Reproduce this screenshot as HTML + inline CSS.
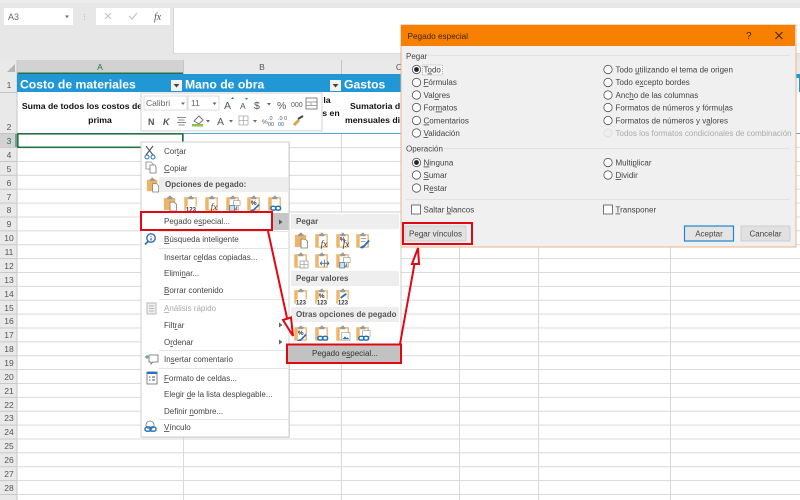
<!DOCTYPE html>
<html lang="es"><head><meta charset="utf-8"><title>Pegado especial</title>
<style>
html,body{margin:0;padding:0;width:800px;height:500px;overflow:hidden;background:#fff}
svg{display:block;filter:blur(.35px)}
text{font-family:"Liberation Sans",sans-serif;font-size:8px;fill:#444}
.r{font-size:8.5px;fill:#555;text-anchor:middle}
.h{font-size:8.5px;fill:#555;text-anchor:middle}
.t{font-size:12.2px;font-weight:bold;fill:#fff}
.b{font-size:8.7px;font-weight:bold;fill:#111;text-anchor:middle}
.d{font-size:8px;fill:#444}
.g{fill:#aaa}
.s{font-weight:bold;fill:#555}
</style></head><body>
<svg width="800" height="500" viewBox="0 0 800 500" xmlns="http://www.w3.org/2000/svg">
<defs>
<pattern id="rows" patternUnits="userSpaceOnUse" x="0" y="147.1" width="10" height="13.875"><rect y="0" width="10" height="1" fill="#dadada"/></pattern>
<pattern id="rowh" patternUnits="userSpaceOnUse" x="0" y="147.1" width="10" height="13.875"><rect y="0" width="10" height="1" fill="#c8c8c8"/></pattern>
<symbol id="clip" viewBox="0 0 16 18" overflow="visible">
<path d="M1 3H13V16H1Z" fill="#fff" stroke="#eaae5c" stroke-width="1.300"/>
<path d="M1 3H4V16H1Z" fill="#eeb566"/>
<path d="M4.500 3.500V2H6V.7H8.500V2H10V4.500H4.500Z" fill="#9a9a9a"/>
</symbol>
<symbol id="solid" viewBox="0 0 16 18" overflow="visible">
<path d="M1 3H13V16H1Z" fill="#eeb566"/>
<path d="M4.500 3.500V2H6V.7H8.500V2H10V4.500H4.500Z" fill="#9a9a9a"/>
<path d="M7.500 7.500H12L14.500 10V17H7.500Z" fill="#fff" stroke="#777" stroke-width=".8"/>
</symbol>
<symbol id="p123" viewBox="0 0 16 18" overflow="visible"><use href="#clip" width="16" height="18"/><rect x="2" y="12" width="13" height="6" fill="#fff"/><text x="2" y="17.500" style="font-size:6.500px;font-weight:bold;fill:#333">123</text></symbol>
<symbol id="pfx" viewBox="0 0 16 18" overflow="visible"><use href="#clip" width="16" height="18"/><text x="6" y="16" style="font-family:'Liberation Serif',serif;font-size:10px;font-style:italic;fill:#333">fx</text></symbol>
<symbol id="pgrid" viewBox="0 0 16 18" overflow="visible"><use href="#clip" width="16" height="18"/><path d="M6.500 9.500H15V17H6.500ZM10.700 9.500V17M6.500 13.200H15" fill="#fff" stroke="#999" stroke-width=".8"/></symbol>
<symbol id="pcol" viewBox="0 0 16 18" overflow="visible"><use href="#clip" width="16" height="18"/><path d="M5.500 12H15M5.500 12l2-2M5.500 12l2 2M15 12l-2-2M15 12l-2 2" fill="none" stroke="#2a6fb5" stroke-width="1"/><path d="M10 8v8" stroke="#777"/></symbol>
<symbol id="pbrush" viewBox="0 0 16 18" overflow="visible"><use href="#clip" width="16" height="18"/><path d="M5 7H11M5 10H10" stroke="#999"/><path d="M8 15.500L14 9" stroke="#2a6fb5" stroke-width="2"/><path d="M4 17l3-3 2 2-2 1.500Z" fill="#1e73c8"/></symbol>
<symbol id="ppct" viewBox="0 0 16 18" overflow="visible"><use href="#clip" width="16" height="18"/><text x="3" y="11" style="font-size:7px;font-weight:bold;fill:#333">%</text><path d="M9 15L14 10" stroke="#2a6fb5" stroke-width="1.800"/><path d="M4 17l4-3 2 2Z" fill="#1e73c8"/></symbol>
<symbol id="pfxp" viewBox="0 0 16 18" overflow="visible"><use href="#clip" width="16" height="18"/><text x="4" y="10" style="font-size:6.500px;font-weight:bold;fill:#333">%</text><text x="7" y="16" style="font-family:'Liberation Serif',serif;font-size:10px;font-style:italic;fill:#333">fx</text></symbol>
<symbol id="ppct123" viewBox="0 0 16 18" overflow="visible"><use href="#p123" width="16" height="18"/><text x="4" y="10.500" style="font-size:7px;font-weight:bold;fill:#333">%</text></symbol>
<symbol id="pb123" viewBox="0 0 16 18" overflow="visible"><use href="#p123" width="16" height="18"/><path d="M5 10.500L11 6" stroke="#2a6fb5" stroke-width="2"/></symbol>
<symbol id="plink" viewBox="0 0 16 18" overflow="visible"><use href="#clip" width="16" height="18"/><rect x="3" y="12" width="5.500" height="4" rx="2" fill="none" stroke="#1e6fb8" stroke-width="1.500"/><rect x="8" y="12" width="5.500" height="4" rx="2" fill="none" stroke="#1e6fb8" stroke-width="1.500"/></symbol>
<symbol id="pimg" viewBox="0 0 16 18" overflow="visible"><use href="#clip" width="16" height="18"/><rect x="6" y="8" width="9" height="8" fill="#fff" stroke="#999" stroke-width=".7"/><path d="M7 15l2.500-3 2 2 1-1 1.500 2Z" fill="#2a6fb5"/></symbol>
<symbol id="plink2" viewBox="0 0 16 18" overflow="visible"><use href="#clip" width="16" height="18"/><rect x="7" y="6" width="8" height="6" fill="#fff" stroke="#999" stroke-width=".7"/><rect x="3" y="12" width="5.500" height="4" rx="2" fill="none" stroke="#1e6fb8" stroke-width="1.500"/><rect x="8" y="12" width="5.500" height="4" rx="2" fill="none" stroke="#1e6fb8" stroke-width="1.500"/></symbol>
<symbol id="ptrans" viewBox="0 0 16 18" overflow="visible"><use href="#clip" width="16" height="18"/><rect x="8" y="6" width="7" height="5" fill="#fff" stroke="#999" stroke-width=".7"/><rect x="4" y="11" width="5" height="6" fill="#cfe0f2" stroke="#2a6fb5" stroke-width=".7"/><path d="M11 12v3H9" fill="none" stroke="#2a6fb5"/></symbol>
<symbol id="pdiag" viewBox="0 0 16 18" overflow="visible"><use href="#clip" width="16" height="18"/><text x="4" y="10.500" style="font-size:7px;font-weight:bold;fill:#333">%</text><path d="M7 16L13 10" stroke="#2a6fb5" stroke-width="1.800"/><path d="M3 17l3-2 2 2Z" fill="#1e73c8"/></symbol>
<symbol id="rad" viewBox="0 0 10 10" overflow="visible"><circle cx="5" cy="5" r="4.200" fill="#fff" stroke="#555" stroke-width=".8"/></symbol>
<symbol id="rads" viewBox="0 0 10 10" overflow="visible"><circle cx="5" cy="5" r="4.200" fill="#fff" stroke="#555" stroke-width=".8"/><circle cx="5" cy="5" r="2.400" fill="#222"/></symbol>
</defs>

<!-- ribbon area -->
<rect width="800" height="74" fill="#e7e7e7"/>
<rect y="0" width="800" height="3" fill="#ededed"/>
<rect x="4" y="8" width="69" height="17" fill="#fff"/>
<text x="8" y="20" style="font-size:9px;fill:#666">A3</text>
<path d="M65 15.500h4l-2 2.500Z" fill="#666"/>
<path d="M84.500 14v.8M84.500 16.500v.8M84.500 19v.8" stroke="#aaa"/>
<rect x="96" y="8" width="74" height="17" fill="#fff"/>
<path d="M105 13l6 6M111 13l-6 6" stroke="#c4c4c4" stroke-width="1.200"/>
<path d="M129 16l3 3 5-6" stroke="#c4c4c4" stroke-width="1.200" fill="none"/>
<text x="154" y="20" style="font-family:'Liberation Serif',serif;font-size:10px;font-style:italic;fill:#555">fx</text>
<rect x="173" y="8" width="627" height="45" fill="#fff"/>
<path d="M173.500 53V8" stroke="#d8d8d8"/><path d="M173 53.500H800" stroke="#d8d8d8"/>

<!-- column headers -->
<rect y="60" width="800" height="14" fill="#e9e9e9"/>
<rect x="17" y="60" width="166" height="14" fill="#d2d2d2"/>
<rect x="17" y="72.500" width="166" height="1.500" fill="#217346"/>
<path d="M15 64V72H7Z" fill="#b5b5b5"/>
<path d="M183.500 60V74M341.500 60V74" stroke="#c6c6c6"/>
<text class="h" x="100" y="70" style="fill:#217346">A</text>
<text class="h" x="262" y="70">B</text>
<text class="h" x="399" y="70">C</text>

<!-- row headers -->
<rect x="0" y="74" width="17" height="426" fill="#e9e9e9"/>
<rect x="0" y="147" width="17" height="353" fill="url(#rowh)"/>
<rect x="0" y="133" width="17" height="14" fill="#d2d2d2"/>
<rect x="15.500" y="133" width="1.500" height="14" fill="#217346"/>
<path d="M0 92.500H17M0 133.500H17" stroke="#c4c4c4"/>
<path d="M17 60V500" stroke="#c6c6c6"/>
<text class="r" x="9" y="88">1</text><text class="r" x="9" y="130">2</text><text class="r" x="9" y="144" style="fill:#217346">3</text>
<text class="r" x="9" y="158">4</text><text class="r" x="9" y="172">5</text><text class="r" x="9" y="186">6</text><text class="r" x="9" y="200">7</text><text class="r" x="9" y="213">8</text><text class="r" x="9" y="227">9</text><text class="r" x="9" y="241">10</text><text class="r" x="9" y="255">11</text><text class="r" x="9" y="269">12</text><text class="r" x="9" y="283">13</text><text class="r" x="9" y="297">14</text><text class="r" x="9" y="311">15</text><text class="r" x="9" y="324">16</text><text class="r" x="9" y="338">17</text><text class="r" x="9" y="352">18</text><text class="r" x="9" y="366">19</text><text class="r" x="9" y="380">20</text><text class="r" x="9" y="394">21</text><text class="r" x="9" y="408">22</text><text class="r" x="9" y="421">23</text><text class="r" x="9" y="435">24</text><text class="r" x="9" y="449">25</text><text class="r" x="9" y="463">26</text><text class="r" x="9" y="477">27</text><text class="r" x="9" y="491">28</text>

<!-- grid -->
<rect x="17" y="147" width="783" height="353" fill="url(#rows)"/>
<path d="M183.500 133V500M341.500 133V500M459.500 133V500M538.500 133V500M670.500 133V500" stroke="#d9d9d9"/>

<!-- table -->
<rect x="17" y="74" width="783" height="18" fill="#2197d5"/>
<rect x="796" y="78" width="4" height="14" fill="#f4f4f4"/>
<path d="M183 133.500H800" stroke="#4aa8dc"/>
<path d="M799.500 78V92" stroke="#2197d5"/>
<text class="t" x="20" y="88.500">Costo de materiales</text>
<text class="t" x="185" y="88.500">Mano de obra</text>
<text class="t" x="344" y="88.500">Gastos</text>
<rect x="171" y="80" width="11" height="11" fill="#f3f3f3"/><path d="M173.500 84h6l-3 3.500Z" fill="#444"/>
<rect x="330" y="80" width="11" height="11" fill="#f3f3f3"/><path d="M332.500 84h6l-3 3.500Z" fill="#444"/>
<text class="b" x="82" y="109">Suma de todos los costos de</text>
<text class="b" x="100" y="123">prima</text>
<text class="b" x="327" y="103">la</text>
<text class="b" x="331" y="116">s en</text>
<text class="b" x="350" y="109" style="text-anchor:start">Sumatoria d</text>
<text class="b" x="345" y="123" style="text-anchor:start">mensuales di</text>
<rect x="17.800" y="133.800" width="165" height="13.500" fill="#fff" stroke="#217346" stroke-width="1.600"/>

<!-- mini toolbar -->
<rect x="141" y="93" width="181" height="38" fill="#fff" stroke="#d2d2d2"/>
<rect x="144" y="96" width="43" height="14" fill="#fff" stroke="#d4d4d4" stroke-width=".8"/>
<rect x="188" y="96" width="31" height="14" fill="#fff" stroke="#d4d4d4" stroke-width=".8"/>
<text x="146" y="106" style="font-size:8.500px;fill:#666">Calibri</text>
<text x="191" y="106" style="font-size:8.500px;fill:#666">11</text>
<path d="M181 102.500h4l-2 2.500ZM212.500 102.500h4l-2 2.500Z" fill="#666"/>
<text x="224" y="109" style="font-size:10.500px;fill:#555">A</text><path d="M231 99l1.500-2 1.500 2Z" fill="#1e73c8"/>
<text x="240" y="109" style="font-size:8.500px;fill:#555">A</text><path d="M245 98l1.500 2 1.500-2Z" fill="#1e73c8"/>
<text x="254" y="109" style="font-size:10.500px;fill:#555">$</text>
<path d="M267 103h4l-2 2.500Z" fill="#666"/>
<text x="277" y="109" style="font-size:10.500px;fill:#555">%</text>
<text x="291" y="107" style="font-size:7px;fill:#555">000</text>
<rect x="306" y="98" width="11" height="11" fill="#fff" stroke="#666" stroke-width=".8"/><path d="M306 102h11M306 105.500h11M311 102v3" stroke="#888" stroke-width=".7"/>
<text x="148" y="125" style="font-size:9px;font-weight:bold;fill:#555">N</text>
<text x="163" y="125" style="font-size:9px;font-weight:bold;font-style:italic;fill:#555">K</text>
<path d="M177 117.500h9M178.500 120h6M177 122.500h9M178.500 125h6" stroke="#666" stroke-width=".8"/>
<path d="M194 121l5-5 4 4-4 4Z" fill="#fff" stroke="#777"/><rect x="192" y="124" width="11" height="2.500" fill="#8bc34a"/>
<path d="M206 120h4l-2 2.500Z" fill="#666"/>
<text x="217" y="125" style="font-size:10.500px;fill:#555">A</text>
<path d="M229 120h4l-2 2.500Z" fill="#666"/>
<rect x="239" y="116" width="9" height="9" fill="none" stroke="#aaa" stroke-width=".8"/><path d="M243.500 116v9M239 120.500h9" stroke="#aaa" stroke-width=".8"/>
<path d="M253 120h4l-2 2.500Z" fill="#666"/>
<text x="262" y="124" style="font-size:6.500px;fill:#555">%</text><text x="268" y="120" style="font-size:5.500px;fill:#2a6fb5">.0</text><text x="268" y="126" style="font-size:5.500px;fill:#555">00</text>
<text x="278" y="120" style="font-size:5.500px;fill:#555">.0</text><text x="278" y="126" style="font-size:5.500px;fill:#2a6fb5">00</text><text x="284" y="120" style="font-size:5.500px;fill:#555">0</text>
<path d="M294 125l5-5" stroke="#d9a24f" stroke-width="3"/><path d="M298 119l5-3" stroke="#444" stroke-width="2"/>

<!-- context menu -->
<rect x="142" y="143" width="148" height="295" fill="#c8c8c8" opacity=".5"/>
<rect x="141" y="142" width="148" height="295" fill="#fff" stroke="#cfcfcf"/>
<path d="M146 146l7 9M153 146l-7 9" stroke="#555" stroke-width="1.100"/><circle cx="147" cy="157" r="2" fill="none" stroke="#2a6fb5"/><circle cx="153" cy="157" r="2" fill="none" stroke="#2a6fb5"/>
<text x="164" y="154">Cor<tspan text-decoration="underline">t</tspan>ar</text>
<path d="M146 162h5l2 2v5h-7Z" fill="#fff" stroke="#888" stroke-width=".8"/><path d="M150 165h5l1 2v6h-6Z" fill="#fff" stroke="#777" stroke-width=".8"/>
<text x="164" y="171"><tspan text-decoration="underline">C</tspan>opiar</text>
<rect x="159" y="177" width="129" height="15" fill="#eeeeee"/>
<use href="#solid" x="146" y="177" width="14" height="16"/>
<text x="165" y="187" class="s">Opciones de pegado:</text>
<use href="#solid" x="163" y="195" width="15" height="17"/>
<use href="#p123" x="184" y="195" width="15" height="17"/>
<use href="#pfx" x="205" y="195" width="15" height="17"/>
<use href="#ptrans" x="226" y="195" width="15" height="17"/>
<use href="#pdiag" x="247" y="195" width="15" height="17"/>
<use href="#plink" x="268" y="195" width="15" height="17"/>
<rect x="272" y="213" width="17" height="17" fill="#c6c6c6"/>
<path d="M279 219.500l3.500 2.500-3.500 2.500Z" fill="#555"/>
<text x="164" y="224">Pegado e<tspan text-decoration="underline">s</tspan>pecial...</text>
<path d="M159 231.500H288" stroke="#e4e4e4"/>
<circle cx="151" cy="238" r="4.200" fill="#fff" stroke="#2a6fb5" stroke-width="1.400"/><path d="M148 241.500l-3 3" stroke="#2a6fb5" stroke-width="1.600"/><path d="M151 236v.8M151 238v2.500" stroke="#333"/>
<text x="164" y="242"><tspan text-decoration="underline">B</tspan>úsqueda inteligente</text>
<path d="M159 248.500H288" stroke="#e4e4e4"/>
<text x="164" y="260">Insertar c<tspan text-decoration="underline">e</tspan>ldas copiadas...</text>
<text x="164" y="276">Elimi<tspan text-decoration="underline">n</tspan>ar...</text>
<text x="164" y="293"><tspan text-decoration="underline">B</tspan>orrar contenido</text>
<path d="M159 299.500H288" stroke="#e4e4e4"/>
<rect x="147" y="303" width="9" height="11" fill="#eee" stroke="#bbb"/><path d="M149 306h5M149 308.500h5M149 311h5" stroke="#bbb"/>
<text x="164" y="311" class="g"><tspan text-decoration="underline">A</tspan>nálisis rápido</text>
<text x="164" y="328">Filt<tspan text-decoration="underline">r</tspan>ar</text>
<path d="M279 322.500l3.500 2.500-3.500 2.500Z" fill="#666"/>
<text x="164" y="345">O<tspan text-decoration="underline">r</tspan>denar</text>
<path d="M279 339.500l3.500 2.500-3.500 2.500Z" fill="#666"/>
<path d="M159 350.500H288" stroke="#e4e4e4"/>
<path d="M149 355h9v7h-5l-2 2v-2h-2Z" fill="#fff" stroke="#666" stroke-width=".8"/><path d="M145 357h4M147 355v4" stroke="#2e9e5b" stroke-width="1"/>
<text x="164" y="362">In<tspan text-decoration="underline">s</tspan>ertar comentario</text>
<path d="M159 368.500H288" stroke="#e4e4e4"/>
<rect x="147" y="372" width="10" height="12" fill="#fff" stroke="#666" stroke-width=".8"/><rect x="147" y="372" width="10" height="2" fill="#1e73c8"/><path d="M149 377h1.500M152 377h3M149 380h1.500M152 380h3" stroke="#555"/>
<text x="164" y="381"><tspan text-decoration="underline">F</tspan>ormato de celdas...</text>
<text x="164" y="397">Elegir <tspan text-decoration="underline">d</tspan>e la lista desplegable...</text>
<text x="164" y="414">Definir <tspan text-decoration="underline">n</tspan>ombre...</text>
<path d="M159 419.500H288" stroke="#e4e4e4"/>
<circle cx="150" cy="425" r="4" fill="#fff" stroke="#777" stroke-width=".8"/>
<rect x="145" y="427" width="6" height="4.200" rx="2" fill="none" stroke="#1e6fb8" stroke-width="1.400"/><rect x="150" y="427" width="6" height="4.200" rx="2" fill="none" stroke="#1e6fb8" stroke-width="1.400"/>
<text x="164" y="430"><tspan text-decoration="underline">V</tspan>ínculo</text>

<!-- submenu -->
<rect x="289" y="212" width="112" height="151" fill="#fff" stroke="#cfcfcf"/>
<rect x="291" y="214" width="108" height="15" fill="#eeeeee"/>
<text x="296" y="224" class="s">Pegar</text>
<use href="#solid" x="294" y="232" width="15" height="17"/>
<use href="#pfx" x="315" y="232" width="15" height="17"/>
<use href="#pfxp" x="336" y="232" width="15" height="17"/>
<use href="#pbrush" x="356" y="232" width="15" height="17"/>
<use href="#pgrid" x="294" y="252" width="15" height="17"/>
<use href="#pcol" x="315" y="252" width="15" height="17"/>
<use href="#ptrans" x="336" y="252" width="15" height="17"/>
<rect x="291" y="271" width="108" height="15" fill="#eeeeee"/>
<text x="296" y="281" class="s">Pegar valores</text>
<use href="#p123" x="294" y="288" width="15" height="17"/>
<use href="#ppct123" x="315" y="288" width="15" height="17"/>
<use href="#pb123" x="336" y="288" width="15" height="17"/>
<rect x="291" y="307" width="108" height="15" fill="#eeeeee"/>
<text x="296" y="317" class="s">Otras opciones de pegado</text>
<use href="#pdiag" x="294" y="325" width="15" height="17"/>
<use href="#plink" x="315" y="325" width="15" height="17"/>
<use href="#pimg" x="336" y="325" width="15" height="17"/>
<use href="#plink2" x="356" y="325" width="15" height="17"/>
<rect x="288" y="345" width="112" height="17" fill="#c2c2c2"/>
<text x="312" y="356" style="fill:#333">Pegado e<tspan text-decoration="underline">s</tspan>pecial...</text>

<!-- dialog -->
<rect x="401" y="25" width="395" height="222" fill="#f0f0f0" stroke="#e8b68c"/>
<rect x="401" y="25" width="394" height="21" fill="#f78000"/>
<text x="407.500" y="39" style="fill:#40240a;font-size:8.200px">Pegado especial</text>
<text x="746" y="39" style="font-size:10px;fill:#40240a">?</text>
<path d="M775.500 32l7 7M782.500 32l-7 7" stroke="#40240a" stroke-width="1.100"/>
<text x="406" y="59">Pegar</text>
<path d="M428 55.500H790" stroke="#e2e2e2"/>
<use href="#rads" x="411.500" y="64.500" width="10" height="10"/>
<rect x="422.500" y="65" width="20" height="10" fill="#f6f6f6" stroke="#888" stroke-width=".6" stroke-dasharray="1 1"/>
<text x="423.500" y="72.500" class="d">T<tspan text-decoration="underline">o</tspan>do</text>
<use href="#rad" x="411.500" y="77.500" width="10" height="10"/><text x="423.500" y="85" class="d"><tspan text-decoration="underline">F</tspan>órmulas</text>
<use href="#rad" x="411.500" y="90" width="10" height="10"/><text x="423.500" y="98" class="d">Val<tspan text-decoration="underline">o</tspan>res</text>
<use href="#rad" x="411.500" y="102.500" width="10" height="10"/><text x="423.500" y="110.500" class="d">For<tspan text-decoration="underline">m</tspan>atos</text>
<use href="#rad" x="411.500" y="115.500" width="10" height="10"/><text x="423.500" y="123.500" class="d"><tspan text-decoration="underline">C</tspan>omentarios</text>
<use href="#rad" x="411.500" y="128" width="10" height="10"/><text x="423.500" y="136" class="d"><tspan text-decoration="underline">V</tspan>alidación</text>
<use href="#rad" x="603" y="64.500" width="10" height="10"/><text x="615.500" y="72.500" class="d">Todo <tspan text-decoration="underline">u</tspan>tilizando el tema de origen</text>
<use href="#rad" x="603" y="77.500" width="10" height="10"/><text x="615.500" y="85" class="d">Todo e<tspan text-decoration="underline">x</tspan>cepto bordes</text>
<use href="#rad" x="603" y="90" width="10" height="10"/><text x="615.500" y="98" class="d">Anc<tspan text-decoration="underline">h</tspan>o de las columnas</text>
<use href="#rad" x="603" y="102.500" width="10" height="10"/><text x="615.500" y="110.500" class="d">Formatos de números y fórmu<tspan text-decoration="underline">l</tspan>as</text>
<use href="#rad" x="603" y="115.500" width="10" height="10"/><text x="615.500" y="123.500" class="d">Formatos de números y v<tspan text-decoration="underline">a</tspan>lores</text>
<circle cx="608" cy="133" r="4" fill="#eeeeee" stroke="#dcdcdc" stroke-width=".8"/><text x="615.500" y="136" class="g">Todos los formatos condicionales de combinación</text>
<text x="406" y="151.500">Operación</text>
<path d="M444 148.500H790" stroke="#e2e2e2"/>
<use href="#rads" x="411.500" y="157.500" width="10" height="10"/><text x="423.500" y="165.500" class="d"><tspan text-decoration="underline">N</tspan>inguna</text>
<use href="#rad" x="411.500" y="170" width="10" height="10"/><text x="423.500" y="178" class="d"><tspan text-decoration="underline">S</tspan>umar</text>
<use href="#rad" x="411.500" y="183" width="10" height="10"/><text x="423.500" y="191" class="d">R<tspan text-decoration="underline">e</tspan>star</text>
<use href="#rad" x="603" y="157.500" width="10" height="10"/><text x="615.500" y="165.500" class="d">Multi<tspan text-decoration="underline">p</tspan>licar</text>
<use href="#rad" x="603" y="170" width="10" height="10"/><text x="615.500" y="178" class="d"><tspan text-decoration="underline">D</tspan>ividir</text>
<path d="M406 199.500H790" stroke="#e2e2e2"/>
<rect x="411.500" y="205" width="9" height="9" fill="#fff" stroke="#555" stroke-width=".8"/><text x="423.500" y="212.500" class="d">Saltar <tspan text-decoration="underline">b</tspan>lancos</text>
<rect x="603.500" y="205" width="9" height="9" fill="#fff" stroke="#555" stroke-width=".8"/><text x="615.500" y="212.500" class="d"><tspan text-decoration="underline">T</tspan>ransponer</text>
<rect x="405" y="226" width="61" height="15" fill="#e1e1e1" stroke="#c8c8c8" stroke-width=".8"/>
<text x="435.500" y="236.500" class="d" style="text-anchor:middle">Pe<tspan text-decoration="underline">g</tspan>ar vínculos</text>
<rect x="684.500" y="226" width="49" height="15" fill="#e4e4e4" stroke="#1f86d0" stroke-width="1.200"/>
<text x="709" y="236.500" class="d" style="text-anchor:middle">Aceptar</text>
<rect x="741" y="226" width="49" height="15" fill="#e1e1e1" stroke="#c8c8c8" stroke-width=".8"/>
<text x="765.500" y="236.500" class="d" style="text-anchor:middle">Cancelar</text>

<!-- red annotations -->
<g fill="none" stroke="#e30613" stroke-width="2">
<rect x="141" y="212" width="131" height="18"/>
<rect x="287" y="344.500" width="114" height="18.500"/>
<rect x="403" y="223" width="69" height="21"/>
<path d="M268 231L287 318"/>
<path d="M283 320L291 317.500L293 336Z" fill="#fff"/>
<path d="M400 344L414.500 264"/>
<path d="M412 264L419 264L418 248Z" fill="#fff"/>
</g>
</svg>
</body></html>
